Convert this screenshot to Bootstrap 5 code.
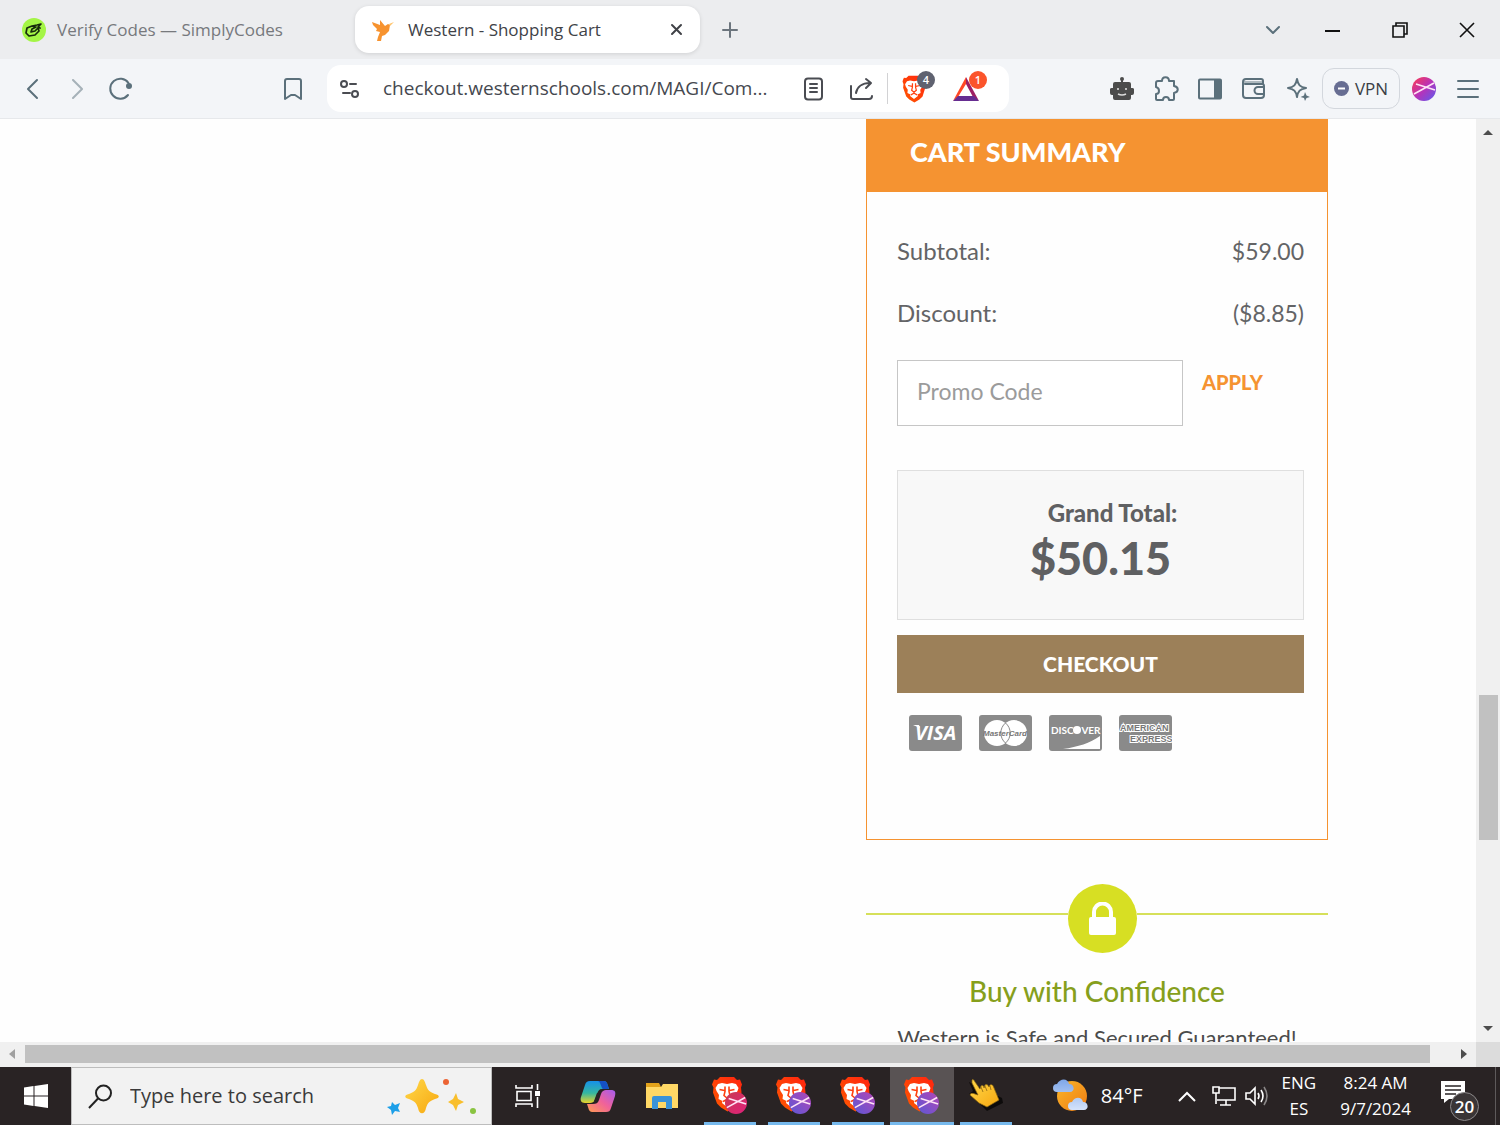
<!DOCTYPE html>
<html lang="en">
<head>
<meta charset="utf-8">
<meta name="viewport" content="width=device-width, initial-scale=1">
<title>Western - Shopping Cart</title>
<link href="https://cdn.jsdelivr.net/npm/bootstrap@5.3.0/dist/css/bootstrap.min.css" rel="stylesheet">
<style>
  body { font-family: "Open Sans", "Noto Sans", sans-serif; color: #3b3e45; }
  svg { display: block; flex: none; }
  button { font-family: inherit; }
  .plain { border: 0; background: none; padding: 0; color: inherit; display: flex; align-items: center; justify-content: center; flex: none; }
  .stroke { fill: none; stroke: currentColor; stroke-width: 2; stroke-linecap: round; stroke-linejoin: round; }

  /* browser chrome */
  .tabstrip { height: 59px; background: #ecedef; font-size: 17px; padding-left: 10px; }
  .tab { height: 47px; width: 345px; border-radius: 14px; padding: 0 12px; gap: 11px; color: #77797d; text-decoration: none; }
  .tab.current { background: #fff; color: #404247; box-shadow: 0 1px 4px rgba(0,0,0,.12); padding: 0 12px 0 16px; gap: 13px; }
  .tab-search { width: 52px; color: #5b707b; }
  .winbtn { width: 67px; height: 59px; color: #111; }
  .toolbar { height: 60px; background: #f3f5f8; border-bottom: 1px solid #e6e8eb; padding: 0 10px 0 11px; color: #5b707b; }
  .tool { width: 44px; height: 44px; position: relative; }
  .bookmark { margin-left: 128px; }
  .omnibox { height: 47px; border-radius: 14px; background: #fff; color: #4a4c52; margin: 0 91px 0 12px; padding-right: 21px; }
  .siteinfo { width: 46px; }
  .omnibox input { border: 0; outline: 0; min-width: 0; font-size: 19px; color: #45484f; padding: 0; margin: 0 0 0 10px; background: none; }
  .count { position: absolute; top: 4px; right: 1px; width: 18px; height: 18px; border-radius: 9px; color: #fff; font-size: 11px; line-height: 18px; font-weight: 600; text-align: center; }
  .count-grey { background: #5f6270; }
  .count-red { background: #fb542b; }
  .vpn { width: 78px; height: 41px; border: 1px solid #d3d7dd; border-radius: 12px; margin: 0 2px; font-size: 17px; color: #3b3e45; gap: 6px; }

  /* shop page */
  .viewport { background: #fefefe; padding-right: 148px; font-family: Lato, sans-serif; color: #636466; }
  .sidebar { width: 462px; flex: none; }
  .summary { border: 1px solid #f59331; height: 721px; font-size: 23px; line-height: 30px; }
  .summary-head { background: #f59331; color: #fff; font-size: 27px; font-weight: 900; line-height: 32px; margin: 0; height: 72px; padding: 16px 43px; }
  .summary-body { padding: 44px 23px 0 30px; }
  .figures { margin-bottom: 32px; }
  .figures dt { font-size: 24px; font-weight: 400; }
  .figures dd { margin: 0; }
  .promo { width: 286px; height: 66px; border: 1px solid #c6c6c6; padding: 0 19px 5px; font-size: 23px; color: #636466; }
  .promo::placeholder { color: #9b9b9b; opacity: 1; }
  .apply { color: #f59331; font-weight: 900; font-size: 20px; line-height: 30px; margin: 7px 0 0 19px; }
  .grand { height: 150px; margin-top: 44px; border: 1px solid #dfdfdf; background: #f8f8f8; padding-top: 27px; color: #5f6062; }
  .grand-label { padding-left: 24px; font-size: 24px; font-weight: 900; }
  .grand-sum { font-size: 45px; line-height: 60px; font-weight: 900; }
  .checkout { height: 58px; margin-top: 15px; background: #9c8059; color: #fff; font-size: 21px; font-weight: 900; }
  .paycards { gap: 17px; padding: 22px 12px; }
  .rule { height: 2px; background: #d6e05a; margin-bottom: 10px; }
  .rule-end { width: 191px; }
  .lockring { width: 69px; height: 69px; border-radius: 50%; background: #d7df23; }
  .trust { margin-top: 44px; }
  .trust h2 { font-size: 28px; line-height: 36px; color: #869f1c; margin: 20px 0 15px; }
  .trust p { font-size: 22px; line-height: 28px; color: #4b4b4b; margin: 0; white-space: nowrap; }

  /* scroll bars */
  .vbar { width: 24px; background: #f0f0f0; padding: 8px 2px; }
  .hbar { height: 25px; background: #f0f0f0; padding: 3px 0 4px; }
  .thumb { background: #c1c1c1; }
  .vbar .thumb { height: 145px; width: 19px; margin: auto 0 182px 1px; }
  .corner { width: 24px; margin: -3px 0 -4px; background: #dcdcdc; }

  /* task bar */
  .taskbar { height: 58px; background: #292324; color: #fff; }
  .start { width: 71px; }
  .search { width: 421px; background: #f2f2f2; border: 1px solid #bdbdbd; padding: 0 14px 0 16px; color: #222; }
  .search input { border: 0; background: none; outline: 0; font-size: 20px; min-width: 0; color: #3a3a3a; padding: 0; margin-left: 17px; }
  .search input::placeholder { color: #3a3a3a; opacity: 1; }
  .task { width: 64px; position: relative; }
  .taskview { margin: 0 6px 0 4px; }
  .running::after { content: ""; position: absolute; bottom: 0; left: 6px; right: 6px; height: 3px; background: #76b9ed; }
  .focused { background: #595354; }
  .focused::after { left: 0; right: 0; }
  .tray { font-size: 17px; line-height: 26px; }
  .weather { margin-right: 35px; font-size: 20px; gap: 12px; }
  .volume { margin-right: 12px; }
  .notes { width: 60px; }
  .note-count { position: absolute; left: 15px; top: 25px; width: 29px; height: 29px; border-radius: 15px; border: 1px solid #8b8889; background: #3a3536; font-size: 17px; line-height: 27px; font-weight: 600; text-align: center; }
</style>
</head>
<body class="vh-100 d-flex flex-column overflow-hidden">

<svg width="0" height="0" class="position-absolute" aria-hidden="true">
  <defs>
    <linearGradient id="ballA" x1="0" y1="0" x2="1" y2="1"><stop offset="0" stop-color="#ff3b4e"/><stop offset=".5" stop-color="#b832b8"/><stop offset="1" stop-color="#5a5cf0"/></linearGradient>
    <linearGradient id="ballB" x1="0" y1="0" x2="1" y2="1"><stop offset="0" stop-color="#c83a50"/><stop offset="1" stop-color="#e0207c"/></linearGradient>
    <linearGradient id="ballC" x1="0" y1="1" x2="1" y2="0"><stop offset="0" stop-color="#5b58d6"/><stop offset="1" stop-color="#b545b5"/></linearGradient>
    <linearGradient id="lionRed" x1="0" y1="1" x2="1" y2="0"><stop offset="0" stop-color="#ff5a00"/><stop offset="1" stop-color="#ff2410"/></linearGradient>
    <linearGradient id="gold" x1="0" y1="0" x2="1" y2="1"><stop offset="0" stop-color="#ffd84a"/><stop offset="1" stop-color="#f7a70f"/></linearGradient>
    <linearGradient id="copA" x1="0" y1="0" x2="0" y2="1"><stop offset="0" stop-color="#1690ea"/><stop offset=".55" stop-color="#35b7a0"/><stop offset="1" stop-color="#e8d32a"/></linearGradient>
    <linearGradient id="copB" x1="1" y1="0" x2="0" y2="1"><stop offset="0" stop-color="#a55bf0"/><stop offset=".5" stop-color="#f0629a"/><stop offset="1" stop-color="#ff9d50"/></linearGradient>
    <linearGradient id="cloudy" x1="0" y1="0" x2="0" y2="1"><stop offset="0" stop-color="#7ea6e8"/><stop offset="1" stop-color="#d5e3fb"/></linearGradient>
    <linearGradient id="sunny" x1="0" y1="0" x2="1" y2="1"><stop offset="0" stop-color="#f9b62b"/><stop offset="1" stop-color="#f07c12"/></linearGradient>
    <symbol id="lion" viewBox="0 0 30 36">
      <path fill="url(#lionRed)" d="M8 1h14l3 3 3-.5 2 5-1 3 .5 5-3.500 11-4 4-6.500 4-6.500-4-4-4L1 16.500l.5-5L0 8.500l2-5 3 .5z"/>
      <path fill="#fff" d="M10 7l5 1 5-1 4 1 2.500 4-1 3-2.500 4 .5 4-4 2 .5 2-5 4-5-4 .5-2-4-2 .5-4-2.500-4-1-3L6 8z"/>
      <path fill="none" stroke="#ff4010" stroke-width="1.600" d="M7.500 13.500l5 1M22.500 13.500l-5 1M13 10.500v5l-1 4 3 2.500 3-2.500-1-4v-5M11 25.500l4-2 4 2"/>
    </symbol>
    <symbol id="web3" viewBox="0 0 24 24"><path fill="none" stroke="#ffe3f6" stroke-width="1.700" d="M2 17L22 6M4 7l19 6"/></symbol>
  </defs>
</svg>

<header>
  <nav class="tabstrip d-flex align-items-center" aria-label="Tabs">
    <a href="#" class="tab d-flex align-items-center">
      <svg width="24" height="24" viewBox="0 0 24 24"><circle cx="12" cy="12" r="12" fill="#a4f546"/><path d="M5 10l-1 5 3 3 6-1 4-4-1-3-3 3-4 1 1-3 4-2-4-1zM10 8l5-1 4-1-3 3 2 1" fill="none" stroke="#16290c" stroke-width="1.700" stroke-linejoin="round" stroke-linecap="round"/></svg>
      <span>Verify Codes — SimplyCodes</span>
    </a>
    <a href="#" class="tab current d-flex align-items-center" aria-current="page">
      <svg width="24" height="24" viewBox="0 0 24 24"><path fill="#f7932f" d="M1 4l8 3V2l5 6 3-2 2 1-1 6-4 4-3 1-1 5H6l1-4 2-5-4-1 1-2-4-4z"/><path fill="#ffc46b" d="M18 6l5-2-4 4z"/></svg>
      <span>Western - Shopping Cart</span>
      <svg class="ms-auto me-1" width="15" height="15" viewBox="0 0 15 15"><path class="stroke" d="M3 3l9 9M12 3l-9 9"/></svg>
    </a>
    <button class="plain ms-3 px-1 text-secondary" aria-label="New tab"><svg width="20" height="20" viewBox="0 0 20 20"><path class="stroke" d="M10 3v14M3 10h14"/></svg></button>
    <div class="d-flex ms-auto">
      <button class="plain tab-search" aria-label="Search tabs"><svg width="20" height="20" viewBox="0 0 20 20"><path class="stroke" d="M4 7l6 6 6-6"/></svg></button>
      <button class="plain winbtn" aria-label="Minimize"><svg width="16" height="16" viewBox="0 0 16 16"><path d="M0 9h15" stroke="#111" stroke-width="2"/></svg></button>
      <button class="plain winbtn" aria-label="Restore"><svg width="16" height="16" viewBox="0 0 16 16"><path fill="none" stroke="#111" stroke-width="1.600" d="M1 4h11v11H1zM4 4V1h11v11h-3"/></svg></button>
      <button class="plain winbtn" aria-label="Close"><svg width="16" height="16" viewBox="0 0 16 16"><path stroke="#111" stroke-width="1.600" d="M1 1l14 14M15 1L1 15"/></svg></button>
    </div>
  </nav>

  <div class="toolbar d-flex align-items-center">
    <button class="plain tool" aria-label="Back"><svg width="24" height="24" viewBox="0 0 24 24"><path class="stroke" d="M16 3l-9 9 9 9"/></svg></button>
    <button class="plain tool opacity-50" aria-label="Forward"><svg width="24" height="24" viewBox="0 0 24 24"><path class="stroke" d="M8 3l9 9-9 9"/></svg></button>
    <button class="plain tool" aria-label="Reload"><svg width="24" height="24" viewBox="0 0 24 24"><path class="stroke" d="M19 18A10 10 0 1 1 19.500 6"/><circle cx="20" cy="9" r="3" fill="currentColor"/></svg></button>
    <button class="plain tool bookmark" aria-label="Bookmark"><svg width="24" height="24" viewBox="0 0 24 24"><path class="stroke" d="M4 22V4a2 2 0 0 1 2-2h12a2 2 0 0 1 2 2v18l-6-4h-4z"/></svg></button>
    <div class="omnibox d-flex flex-grow-1 align-items-center">
      <button class="plain siteinfo" aria-label="Site information"><svg width="20" height="20" viewBox="0 0 20 20"><g class="stroke"><circle cx="4" cy="5" r="3"/><path d="M10 5h6M3 14h7"/><circle cx="15" cy="15" r="3"/></g></svg></button>
      <input class="flex-grow-1" type="text" aria-label="Address" value="checkout.westernschools.com/MAGI/Com...">
      <button class="plain tool" aria-label="Reader mode"><svg width="24" height="24" viewBox="0 0 24 24"><rect class="stroke" x="4" y="1.500" width="17" height="21" rx="3"/><path class="stroke" d="M9 7h7M9 11h7M9 15h7"/></svg></button>
      <button class="plain tool ms-1" aria-label="Share"><svg width="26" height="24" viewBox="0 0 26 24"><path class="stroke" d="M3 9v11a2 2 0 0 0 2 2h16a3 3 0 0 0 3-3M8 16c1-6 6-10 14-10M18 2l5 4-5 5"/></svg></button>
      <div class="vr my-2 ms-1"></div>
      <button class="plain tool ms-1" aria-label="Brave Shields"><svg width="24" height="28" viewBox="0 0 30 36"><use href="#lion" width="30" height="36"/></svg><span class="count count-grey">4</span></button>
      <button class="plain tool ms-2" aria-label="Brave Rewards"><svg width="28" height="26" viewBox="0 0 28 26"><path fill="#ff4724" d="M14 1v7L6 21l-5 4z"/><path fill="#9e1f63" d="M14 1l13 24-6-4-7-13z"/><path fill="#662d91" d="M1 25l5-5h16l5 5z"/></svg><span class="count count-red">1</span></button>
    </div>
    <div class="d-flex align-items-center">
      <button class="plain tool" aria-label="Robot extension"><svg width="24" height="26" viewBox="0 0 24 26"><g fill="#4c4c4c"><circle cx="12" cy="3" r="2"/><path d="M11 4h2v3h-2zM5 6h14a2 2 0 0 1 2 2v4h1a2 2 0 0 1 2 3v2a2 2 0 0 1-2 2h-1v3a2 2 0 0 1-2 2H5a2 2 0 0 1-2-2v-3H2a2 2 0 0 1-2-2v-2a2 2 0 0 1 2-3h1V8a2 2 0 0 1 2-2z"/></g><path d="M8 12v2M16 12v2M8 18q4 2 8 0" fill="none" stroke="#ddd" stroke-width="1.600"/></svg></button>
      <button class="plain tool" aria-label="Extensions"><svg width="26" height="26" viewBox="0 0 26 26"><path class="stroke" d="M5 5h4c0-5 7-5 7 0h5v5c5 1 5 6 0 7v6a1 1 0 0 1-1 1h-4c0-4-6-4-6 0H4a1 1 0 0 1-1-1v-5c4 0 4-6 0-7V7a2 2 0 0 1 2-2z"/></svg></button>
      <button class="plain tool" aria-label="Side panel"><svg width="24" height="22" viewBox="0 0 24 22"><rect class="stroke" x="1" y="1.500" width="22" height="19" rx="1"/><path fill="currentColor" d="M16 1h7v20h-7z"/></svg></button>
      <button class="plain tool" aria-label="Wallet"><svg width="24" height="22" viewBox="0 0 24 22"><path d="M2 3h19v3H2z" fill="currentColor" opacity=".45"/><path class="stroke" d="M4 1h15a2 2 0 0 1 2 2v3H3M1 4a3 3 0 0 1 3-3M1 4v13a3 3 0 0 0 3 3h15a3 3 0 0 0 3-3V8a2 2 0 0 0-2-2M22 9h-6a3 3 0 0 0 0 7h6"/></svg></button>
      <button class="plain tool" aria-label="Leo AI"><svg width="24" height="24" viewBox="0 0 24 24"><path class="stroke" d="M11 2c1 6 3 8 9 9-6 1-8 3-9 9-1-6-3-8-9-9 6-1 8-3 9-9z"/><path fill="currentColor" d="M19 15l1.500 3.500L24 20l-3.500 1L19 24l-1-3-3.500-1 3.500-1.500z"/></svg></button>
      <button class="plain vpn"><svg width="15" height="15" viewBox="0 0 15 15"><circle cx="7.500" cy="7.500" r="7.500" fill="#676d92"/><path d="M4 7.500h7" stroke="#fff" stroke-width="2"/></svg>VPN</button>
      <button class="plain tool" aria-label="Profile"><svg width="24" height="24" viewBox="0 0 24 24"><circle cx="12" cy="12" r="12" fill="url(#ballA)"/><use href="#web3" width="24" height="24"/></svg></button>
      <button class="plain tool" aria-label="Menu"><svg width="24" height="24" viewBox="0 0 24 24"><path class="stroke" d="M2 4h20M2 12h20M2 20h20"/></svg></button>
    </div>
  </div>
</header>

<div class="d-flex flex-grow-1 overflow-hidden">
  <main class="viewport d-flex flex-grow-1 justify-content-end overflow-hidden">
    <div class="sidebar">
      <section class="summary">
        <h1 class="summary-head">CART SUMMARY</h1>
        <div class="summary-body">
          <dl class="figures d-flex justify-content-between"><dt>Subtotal:</dt><dd>$59.00</dd></dl>
          <dl class="figures d-flex justify-content-between"><dt>Discount:</dt><dd>($8.85)</dd></dl>
          <form class="d-flex align-items-start">
            <input class="promo" type="text" placeholder="Promo Code" aria-label="Promo Code">
            <button type="button" class="plain apply">APPLY</button>
          </form>
          <div class="grand text-center">
            <div class="grand-label">Grand Total:</div>
            <div class="grand-sum">$50.15</div>
          </div>
          <button class="plain checkout w-100">CHECKOUT</button>
          <div class="paycards d-flex">
            <svg width="53" height="36" viewBox="0 0 53 36" role="img" aria-label="Visa"><rect width="53" height="36" rx="3" fill="#8a8a8a"/><text x="6" y="25" font-family="Open Sans" font-size="20" font-weight="700" font-style="italic" fill="#fff">VISA</text><path d="M4 10h6l1 3z" fill="#fff"/></svg>
            <svg width="53" height="36" viewBox="0 0 53 36" role="img" aria-label="MasterCard"><rect width="53" height="36" rx="3" fill="#8a8a8a"/><circle cx="18" cy="18" r="13" fill="#fff"/><circle cx="35" cy="18" r="13" fill="#fff"/><path d="M26.500 8a13 13 0 0 1 0 20a13 13 0 0 1 0-20z" fill="none" stroke="#8a8a8a"/><text x="26" y="21" text-anchor="middle" font-family="Liberation Sans" font-size="8" font-weight="700" font-style="italic" fill="#777">MasterCard</text></svg>
            <svg width="53" height="36" viewBox="0 0 53 36" role="img" aria-label="Discover"><rect width="53" height="36" rx="3" fill="#8a8a8a"/><text x="2" y="19" font-family="Lato" font-size="10" font-weight="700" fill="#fff">DISC<tspan fill="none">O</tspan>VER</text><circle cx="28" cy="15" r="4" fill="#fff"/><path d="M14 34c15-2 27-6 37-13v13z" fill="#fff"/></svg>
            <svg width="53" height="36" viewBox="0 0 53 36" role="img" aria-label="American Express"><rect width="53" height="36" rx="3" fill="#8a8a8a"/><g font-family="Liberation Sans" font-size="9" font-weight="700" fill="#777" stroke="#fff" stroke-width="2" paint-order="stroke"><text x="1" y="16">AMERICAN</text><text x="11" y="27">EXPRESS</text></g></svg>
          </div>
        </div>
      </section>
      <section class="trust text-center">
        <div class="d-flex align-items-center">
          <div class="rule flex-grow-1"></div>
          <div class="lockring flex-shrink-0 d-flex align-items-center justify-content-center">
            <svg width="28" height="34" viewBox="0 0 28 34"><rect y="15" width="27" height="18" rx="2" fill="#fff"/><path d="M5 16v-6a8.500 8.500 0 0 1 17 0v6" fill="none" stroke="#fff" stroke-width="4"/></svg>
          </div>
          <div class="rule rule-end"></div>
        </div>
        <h2>Buy with Confidence</h2>
        <p>Western is Safe and Secured Guaranteed!</p>
      </section>
    </div>
  </main>
  <div class="vbar d-flex flex-column align-items-center" aria-hidden="true">
    <svg width="12" height="12" viewBox="0 0 12 12"><path d="M1 8l5-5 5 5z" fill="#4d4d4d"/></svg>
    <div class="thumb"></div>
    <svg width="12" height="12" viewBox="0 0 12 12"><path d="M1 4l5 5 5-5z" fill="#4d4d4d"/></svg>
  </div>
</div>

<div class="hbar d-flex" aria-hidden="true">
  <svg class="my-auto mx-2" width="9" height="12" viewBox="0 0 9 12"><path d="M7 1v10L1 6z" fill="#a0a0a0"/></svg>
  <div class="thumb flex-grow-1"></div>
  <svg class="my-auto ms-4 me-2" width="14" height="12" viewBox="0 0 14 12"><path d="M7 1v10l6-5z" fill="#4d4d4d"/></svg>
  <div class="corner"></div>
</div>

<footer class="taskbar d-flex flex-shrink-0">
  <button class="plain start" aria-label="Start"><svg width="24" height="24" viewBox="0 0 24 24"><path fill="#fff" d="M0 3.500L9.500 2v9.500H0zM10.500 2L24 0v11.500H10.500zM0 12.500h9.500V22L0 20.500zM10.500 12.500H24V24l-13.500-2z"/></svg></button>
  <label class="search d-flex align-items-center">
    <svg width="25" height="25" viewBox="0 0 25 25"><circle cx="15.500" cy="9" r="7.500" fill="none" stroke="#222" stroke-width="2"/><path d="M10 14.500L1 24" stroke="#222" stroke-width="2"/></svg>
    <input class="flex-grow-1" type="text" placeholder="Type here to search" aria-label="Type here to search">
    <svg width="90" height="38" viewBox="0 0 90 38"><path fill="url(#gold)" d="M35 2c2 0 3 3 4 6 2 6 4 7 9 9 5 1 5 4 0 5-5 2-7 3-9 9-1 7-7 7-8 0-2-6-4-7-9-9-5-1-5-4 0-5 5-2 7-3 9-9 1-3 2-6 4-6z"/><circle cx="59" cy="5" r="3" fill="#ec6434"/><path fill="#f9bf2c" d="M69 16l2 6 6 3-6 3-2 6-3-6-5-3 5-3z"/><path fill="#1d9fe8" d="M5 25l3 3 5-2-2 5 2 4-5-1-3 4-1-5-4-3 4-1z"/><circle cx="86" cy="34" r="3" fill="#8ac441"/></svg>
  </label>
  <button class="plain task taskview" aria-label="Task view"><svg width="26" height="24" viewBox="0 0 26 24"><path fill="none" stroke="#fff" stroke-width="1.600" d="M1 1v3h16V1M1 23v-3h16v3M2 7.500h14v9H2zM22.500 0v6M22.500 13v11"/><path fill="#fff" d="M20 7h5v5h-5z"/></svg></button>
  <button class="plain task" aria-label="Copilot"><svg width="36" height="33" viewBox="0 0 36 33"><path fill="url(#copA)" d="M10 1h13c3 0 4 1 5 5l1 3h-7c-3 0-4 2-5 5l-2 6c-1 2-3 3-5 3H5c-4 0-5-3-4-6L5 5c1-3 2-4 5-4z"/><path fill="#1551c5" d="M18 1h5c3 0 4 1 5 5l1 3h-6c-2-1-2-7-5-8z"/><path fill="url(#copB)" d="M26 32H13c-3 0-4-1-5-5l-1-3h6c3 0 5-1 6-4l2-6c1-3 3-4 5-4h5c4 0 5 2 4 6l-4 12c-1 3-2 4-5 4z"/><path fill="#292324" d="M17 13h3l-3 8h-3z"/></svg></button>
  <button class="plain task me-1" aria-label="File Explorer"><svg width="32" height="28" viewBox="0 0 32 28"><path fill="#e2a21b" d="M0 1h13l2 4H0z"/><path fill="#ffd866" d="M0 5h15l2-3h15v24H0z"/><path fill="#3a93d8" d="M6 16a2 2 0 0 1 2-2h16a2 2 0 0 1 2 2v11h-6v-7h-8v7H6z"/></svg></button>
  <button class="plain task running" aria-label="Brave"><svg width="38" height="40" viewBox="0 0 38 40"><use href="#lion" x="1" width="30" height="36"/><circle cx="25" cy="27" r="11" fill="url(#ballB)"/><use href="#web3" x="14" y="16" width="22" height="22"/></svg></button>
  <button class="plain task running" aria-label="Brave, window 2"><svg width="38" height="40" viewBox="0 0 38 40"><use href="#lion" x="1" width="30" height="36"/><circle cx="25" cy="27" r="11" fill="url(#ballC)"/><use href="#web3" x="14" y="16" width="22" height="22"/></svg></button>
  <button class="plain task running" aria-label="Brave, window 3"><svg width="38" height="40" viewBox="0 0 38 40"><use href="#lion" x="1" width="30" height="36"/><circle cx="25" cy="27" r="11" fill="url(#ballC)"/><use href="#web3" x="14" y="16" width="22" height="22"/></svg></button>
  <button class="plain task running focused" aria-label="Brave, window 4"><svg width="38" height="40" viewBox="0 0 38 40"><use href="#lion" x="1" width="30" height="36"/><circle cx="25" cy="27" r="11" fill="url(#ballC)"/><use href="#web3" x="14" y="16" width="22" height="22"/></svg></button>
  <button class="plain task running" aria-label="Pointer"><svg width="36" height="34" viewBox="0 0 36 34"><path fill="#0d0b0b" d="M1 3l4 9-4 3 14 13 4 4 16-8-1-5z"/><path fill="url(#gold)" stroke="#8a6510" stroke-width=".7" d="M4 1c1-1 2 0 3 2l5 7 1-3c2-1 3 0 3 2l1-3c2-1 3 0 4 2l1-2c2-1 3 0 4 3l5 12-12 7-8-4L2 16c0-2 3-2 5-1l3 1L4 4z"/><path d="M13 8l2 5M17 7l2 5M22 7l1 4" stroke="#8a6510" stroke-width=".8"/></svg></button>

  <div class="tray d-flex align-items-center ms-auto">
    <button class="plain weather"><svg width="36" height="34" viewBox="0 0 36 34"><circle cx="19" cy="17" r="15" fill="url(#sunny)"/><path fill="url(#cloudy)" d="M4 13a4 4 0 0 1 0-8C7-1 15-1 16 5c6 0 6 8 1 8zM19 31a4 4 0 0 1 0-8c3-6 10-5 11 0 6 0 6 8 1 8z"/></svg>84°F</button>
    <button class="plain me-3" aria-label="Hidden icons"><svg width="18" height="12" viewBox="0 0 18 12"><path fill="none" stroke="#fff" stroke-width="2" d="M1 11l8-8 8 8"/></svg></button>
    <button class="plain me-2" aria-label="Network"><svg width="24" height="22" viewBox="0 0 24 22"><path fill="none" stroke="#fff" stroke-width="1.600" d="M7 3h16v12H5M14 15v5M8 20h11M1 2h6v6H1zM4 8v11"/></svg></button>
    <button class="plain volume" aria-label="Volume"><svg width="26" height="22" viewBox="0 0 26 22"><g fill="none" stroke="#fff" stroke-width="1.600"><path d="M2 8h4l5-5v16l-5-5H2zM14 8q2 3 0 6M17 5q4 6 0 12"/><path opacity=".45" d="M20 2q6 9 0 18"/></g></svg></button>
    <button class="plain text-center me-4">ENG<br>ES</button>
    <button class="plain text-center me-4">8:24 AM<br>9/7/2024</button>
    <button class="plain position-relative h-100 notes" aria-label="Notifications"><svg class="me-4 mb-2" width="24" height="24" viewBox="0 0 24 24"><path fill="#fff" d="M0 1h24v18H8l-5 4v-4H0z"/><path d="M4 6h16M4 10h16M4 14h11" stroke="#292324" stroke-width="1.600"/></svg><span class="note-count">20</span></button>
    <div class="vr h-100 me-1"></div>
  </div>
</footer>
<script src="https://cdn.jsdelivr.net/npm/bootstrap@5.3.0/dist/js/bootstrap.bundle.min.js"></script>
</body>
</html>
